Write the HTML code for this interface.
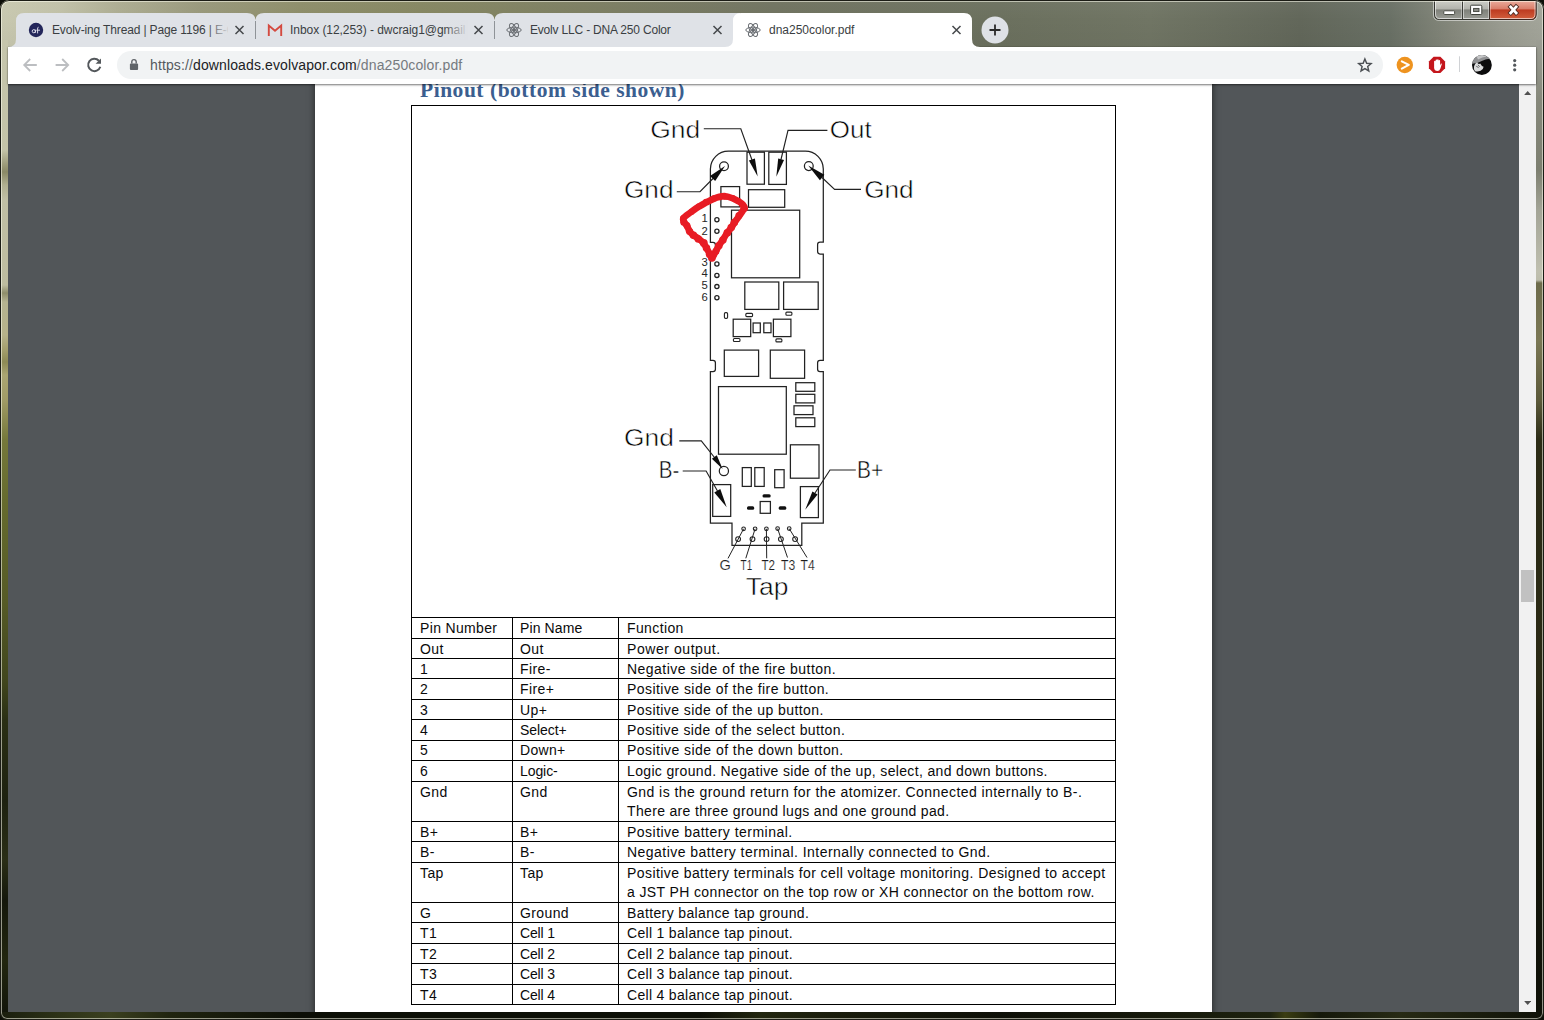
<!DOCTYPE html>
<html lang="en">
<head>
<meta charset="utf-8">
<title>dna250color.pdf</title>
<style>
*{box-sizing:border-box;margin:0;padding:0}
html,body{width:1544px;height:1020px;overflow:hidden;background:#0c0e08}
body{position:relative;font-family:"Liberation Sans",sans-serif;color:#000}
.abs{position:absolute}
/* ---------- window frame (aero glass) ---------- */
#frame{position:absolute;left:0;top:0;width:1544px;height:1020px;border-radius:9px 9px 7px 7px;overflow:hidden;
 background:#14180c}
#glassTop{position:absolute;left:0;top:0;width:1544px;height:90px;
 background:linear-gradient(180deg,rgba(255,255,255,.04) 0px,rgba(255,255,255,0) 20px,rgba(0,0,0,.03) 47px),linear-gradient(90deg,#c8c8b0 0px,#c0c0a7 60px,#abab90 120px,#97977a 200px,#8c8c68 300px,#848560 420px,#7a7c60 600px,#6f725f 772px,#6b705e 1000px,#707564 1150px,#62675a 1300px,#697065 1390px,#84877b 1450px,#999b90 1500px,#a3a59a 1544px)}
#glassLeft{position:absolute;left:0;top:40px;width:8px;height:980px;
 background:linear-gradient(180deg,#c6c6ac 0px,#c3c3a8 110px,#9b9a79 125px,#8a8966 132px,#b0af90 145px,#c0bfa5 160px,#bdbc9f 245px,#8e8d6a 253px,#b5b391 262px,#b6b28a 295px,#a39e6c 310px,#8d8a55 322px,#aaa572 335px,#a09b66 360px,#75783a 400px,#666b2e 460px,#565b26 560px,#41461d 640px,#2a2f14 680px,#1d2110 760px,#2a2e16 820px,#14170b 860px,#22260f 920px,#12150a 972px)}
#glassRight{position:absolute;left:1536px;top:40px;width:8px;height:980px;
 background:linear-gradient(180deg,#9c9e94 0px,#86887b 60px,#7d7f70 130px,#a3a496 170px,#c0c0b0 232px,#bdbdac 240px,#6d6b4b 243px,#7b7855 300px,#5c5a3a 360px,#2c2c16 400px,#2a2914 640px,#17190b 720px,#0f1108 972px)}
#glassBottom{position:absolute;left:0;top:1012px;width:1544px;height:8px;
 background:linear-gradient(90deg,#1a1e0e 0px,#2d3217 60px,#3b401f 110px,#20240f 170px,#0c0e06 300px,#0c0e06 700px,#22260f 760px,#1a1d0c 830px,#0d0f07 1000px,#1d210e 1270px,#3b3d12 1285px,#15180a 1320px,#272a14 1400px,#0f1108 1544px)}
#edge{position:absolute;left:0;top:0;width:1544px;height:1020px;border-radius:9px 9px 7px 7px;border:1px solid #1b1c15;box-shadow:inset 0 0 0 1px rgba(255,255,240,.55);pointer-events:none}
/* ---------- tabs ---------- */
.ttl{position:absolute;top:22px;height:16px;line-height:16px;font-size:12px;color:#3a3e42;white-space:nowrap;overflow:hidden}
.fade{position:absolute;top:20px;width:24px;height:20px;background:linear-gradient(90deg,rgba(222,225,230,0),#dee1e6)}
#toolbar{position:absolute;left:8px;top:47px;width:1528px;height:37px;background:#fff;box-shadow:0 1px 2px rgba(0,0,0,.5),0 0 1px rgba(0,0,0,.4)}
#omni{position:absolute;left:109px;top:4px;width:1266px;height:28px;border-radius:14px;background:#f1f3f4}
#url{position:absolute;left:150px;top:57px;font-size:14px;line-height:16px;color:#202124;white-space:nowrap;letter-spacing:0.12px}
#url span{color:#767a7f}
#url i{font-style:normal;color:#55595e}
/* ---------- content ---------- */
#content{position:absolute;left:8px;top:84px;width:1528px;height:928px;background:#525659;overflow:hidden}
#page{position:absolute;left:307px;top:-20px;width:897px;height:960px;background:#fff;box-shadow:0 0 7px rgba(0,0,0,.6)}
#scroll{position:absolute;left:1511px;top:0;width:17px;height:928px;background:#f1f1f1}
#thumb{position:absolute;left:2px;top:486px;width:13px;height:32px;background:#c1c1c1}
/* ---------- pdf ---------- */
#h1{position:absolute;left:420px;top:77.2px;font-family:"Liberation Serif",serif;font-weight:bold;font-size:21.5px;letter-spacing:0.52px;line-height:26px;color:#3b5e8f;white-space:nowrap}
.hl{position:absolute;left:411px;width:705px;height:1px;background:#000}
.vl{position:absolute;width:1px;background:#000}
.t{position:absolute;font-size:14px;letter-spacing:0.39px;line-height:16px;white-space:nowrap;color:#0a0a0a}
</style>
</head>
<body>
<div id="frame">
 <div id="glassTop"></div>
 <div id="glassLeft"></div>
 <div id="glassRight"></div>
 <div id="glassBottom"></div>

 <!-- CONTENT -->
 <div id="content">
  <div id="page"></div>
  <div id="scroll">
   <svg class="abs" style="left:5px;top:7.3px" width="7.4" height="4" viewBox="0 0 9 5"><path d="M0 5 L4.5 0 L9 5Z" fill="#505050"/></svg>
   <div id="thumb"></div>
   <svg class="abs" style="left:5px;top:916.6px" width="7.4" height="4" viewBox="0 0 9 5"><path d="M0 0 L4.5 5 L9 0Z" fill="#505050"/></svg>
  </div>
 </div>

 <!-- PDF text / table (absolute in window coords) -->
 <div id="pdf">
  <div id="h1">Pinout (bottom side shown)</div>
  <div class="hl" style="top:105px"></div>
  <div class="hl" style="top:617.0px"></div>
  <div class="hl" style="top:638.0px"></div>
  <div class="hl" style="top:658.0px"></div>
  <div class="hl" style="top:678.0px"></div>
  <div class="hl" style="top:699.0px"></div>
  <div class="hl" style="top:719.0px"></div>
  <div class="hl" style="top:740.0px"></div>
  <div class="hl" style="top:760.0px"></div>
  <div class="hl" style="top:781.0px"></div>
  <div class="hl" style="top:821.0px"></div>
  <div class="hl" style="top:841.0px"></div>
  <div class="hl" style="top:862.0px"></div>
  <div class="hl" style="top:902.0px"></div>
  <div class="hl" style="top:922.0px"></div>
  <div class="hl" style="top:943.0px"></div>
  <div class="hl" style="top:963.0px"></div>
  <div class="hl" style="top:984.0px"></div>
  <div class="hl" style="top:1004.0px"></div>
  <div class="vl" style="left:411px;top:105px;height:900px"></div>
  <div class="vl" style="left:1115px;top:105px;height:900px"></div>
  <div class="vl" style="left:512px;top:617px;height:388px"></div>
  <div class="vl" style="left:618px;top:617px;height:388px"></div>
  <div class="t" style="left:420px;top:620.15px;letter-spacing:0.345px">Pin Number</div>
  <div class="t" style="left:520px;top:620.15px;letter-spacing:0.124px">Pin Name</div>
  <div class="t" style="left:627px;top:620.15px;letter-spacing:0.386px">Function</div>
  <div class="t" style="left:420px;top:641.15px">Out</div>
  <div class="t" style="left:520px;top:641.15px">Out</div>
  <div class="t" style="left:627px;top:641.15px;letter-spacing:0.561px">Power output.</div>
  <div class="t" style="left:420px;top:661.15px">1</div>
  <div class="t" style="left:520px;top:661.15px">Fire-</div>
  <div class="t" style="left:627px;top:661.15px;letter-spacing:0.465px">Negative side of the fire button.</div>
  <div class="t" style="left:420px;top:681.15px">2</div>
  <div class="t" style="left:520px;top:681.15px">Fire+</div>
  <div class="t" style="left:627px;top:681.15px;letter-spacing:0.444px">Positive side of the fire button.</div>
  <div class="t" style="left:420px;top:702.15px">3</div>
  <div class="t" style="left:520px;top:702.15px">Up+</div>
  <div class="t" style="left:627px;top:702.15px;letter-spacing:0.423px">Positive side of the up button.</div>
  <div class="t" style="left:420px;top:722.15px">4</div>
  <div class="t" style="left:520px;top:722.15px;letter-spacing:-0.061px">Select+</div>
  <div class="t" style="left:627px;top:722.15px;letter-spacing:0.386px">Positive side of the select button.</div>
  <div class="t" style="left:420px;top:742.15px">5</div>
  <div class="t" style="left:520px;top:742.15px;letter-spacing:0.296px">Down+</div>
  <div class="t" style="left:627px;top:742.15px;letter-spacing:0.459px">Positive side of the down button.</div>
  <div class="t" style="left:420px;top:763.15px">6</div>
  <div class="t" style="left:520px;top:763.15px;letter-spacing:-0.080px">Logic-</div>
  <div class="t" style="left:627px;top:763.15px;letter-spacing:0.348px">Logic ground. Negative side of the up, select, and down buttons.</div>
  <div class="t" style="left:420px;top:784.15px">Gnd</div>
  <div class="t" style="left:520px;top:784.15px">Gnd</div>
  <div class="t" style="left:627px;top:784.15px;letter-spacing:0.434px">Gnd is the ground return for the atomizer. Connected internally to B-.</div>
  <div class="t" style="left:627px;top:803.15px;letter-spacing:0.336px">There are three ground lugs and one ground pad.</div>
  <div class="t" style="left:420px;top:824.15px">B+</div>
  <div class="t" style="left:520px;top:824.15px">B+</div>
  <div class="t" style="left:627px;top:824.15px;letter-spacing:0.475px">Positive battery terminal.</div>
  <div class="t" style="left:420px;top:844.15px">B-</div>
  <div class="t" style="left:520px;top:844.15px">B-</div>
  <div class="t" style="left:627px;top:844.15px;letter-spacing:0.458px">Negative battery terminal. Internally connected to Gnd.</div>
  <div class="t" style="left:420px;top:865.15px">Tap</div>
  <div class="t" style="left:520px;top:865.15px">Tap</div>
  <div class="t" style="left:627px;top:865.15px;letter-spacing:0.421px">Positive battery terminals for cell voltage monitoring. Designed to accept</div>
  <div class="t" style="left:627px;top:884.15px;letter-spacing:0.381px">a JST PH connector on the top row or XH connector on the bottom row.</div>
  <div class="t" style="left:420px;top:905.15px">G</div>
  <div class="t" style="left:520px;top:905.15px;letter-spacing:0.381px">Ground</div>
  <div class="t" style="left:627px;top:905.15px;letter-spacing:0.381px">Battery balance tap ground.</div>
  <div class="t" style="left:420px;top:925.15px">T1</div>
  <div class="t" style="left:520px;top:925.15px;letter-spacing:-0.145px">Cell 1</div>
  <div class="t" style="left:627px;top:925.15px;letter-spacing:0.306px">Cell 1 balance tap pinout.</div>
  <div class="t" style="left:420px;top:946.15px">T2</div>
  <div class="t" style="left:520px;top:946.15px;letter-spacing:-0.145px">Cell 2</div>
  <div class="t" style="left:627px;top:946.15px;letter-spacing:0.306px">Cell 2 balance tap pinout.</div>
  <div class="t" style="left:420px;top:966.15px">T3</div>
  <div class="t" style="left:520px;top:966.15px;letter-spacing:-0.145px">Cell 3</div>
  <div class="t" style="left:627px;top:966.15px;letter-spacing:0.306px">Cell 3 balance tap pinout.</div>
  <div class="t" style="left:420px;top:987.15px">T4</div>
  <div class="t" style="left:520px;top:987.15px;letter-spacing:-0.145px">Cell 4</div>
  <div class="t" style="left:627px;top:987.15px;letter-spacing:0.306px">Cell 4 balance tap pinout.</div>
  <svg class="abs" style="left:0;top:0" width="1544" height="1020" viewBox="0 0 1544 1020" font-family="'Liberation Sans',sans-serif" fill="none" stroke="#222" stroke-width="1.25">
   <!-- board outline -->
   <path d="M710.4 242.3 V169 A18 18 0 0 1 728.4 151.2 H805.3 A18 18 0 0 1 823.3 169 V242 H820 Q817.6 242 817.6 244.4 V251.6 Q817.6 254 820 254 H823.3 V360.4 H820 Q817.6 360.4 817.6 362.8 V369.2 Q817.6 371.6 820 371.6 H823.3 V523.2 H801.8 V545.4 H732 V523.2 H710.4 V371.6 H713 Q715.4 371.6 715.4 369.2 V362.8 Q715.4 360.4 713 360.4 H710.4 V254 H713 Q715.4 254 715.4 251.6 V244.7 Q715.4 242.3 713 242.3 Z"/>
   <!-- top pads -->
   <rect x="747" y="152.2" width="17.4" height="32"/>
   <rect x="768.8" y="152.2" width="17.6" height="32.2"/>
   <circle cx="724" cy="166.3" r="4.4"/>
   <circle cx="808.8" cy="166.1" r="4.4"/>
   <rect x="720.9" y="186.6" width="18.7" height="20.3"/>
   <rect x="748.5" y="189.7" width="36.2" height="17.6"/>
   <rect x="731.5" y="210.2" width="68.2" height="67.6"/>
   <rect x="744.8" y="282" width="34" height="27.4"/>
   <rect x="783.6" y="282" width="34.6" height="27.4"/>
   <g stroke-width="1.1">
   <rect x="745.8" y="313.4" width="6.8" height="3.2" rx="1"/>
   <rect x="785.9" y="312.1" width="6" height="3.2" rx="1"/>
   <rect x="724.4" y="312.6" width="3.2" height="5.8" rx="1.2"/>
   <rect x="733.4" y="338.5" width="6.6" height="3" rx="1"/>
   <rect x="775.9" y="338.9" width="6" height="3" rx="1"/>
   </g>
   <rect x="733.2" y="319.2" width="17.5" height="17.4"/>
   <rect x="773.4" y="319.2" width="17.5" height="17.4"/>
   <rect x="753.1" y="323" width="7.2" height="9.7"/>
   <rect x="763.8" y="323" width="7.2" height="9.7"/>
   <rect x="724.3" y="350.1" width="34.3" height="26.3"/>
   <rect x="770.3" y="350.1" width="34.3" height="28.2"/>
   <rect x="718.5" y="386.6" width="67.8" height="67.6"/>
   <rect x="795.8" y="382.7" width="19" height="8.6"/>
   <rect x="795.8" y="394.3" width="19" height="8.6"/>
   <rect x="794" y="405.8" width="19" height="8.8"/>
   <rect x="795.8" y="417.8" width="19" height="8.8"/>
   <rect x="790.4" y="444.8" width="28.6" height="33.4"/>
   <circle cx="723.9" cy="471" r="4.6"/>
   <rect x="742.3" y="467.6" width="9" height="18.8"/>
   <rect x="754.8" y="467.6" width="9.4" height="18.8"/>
   <rect x="774.7" y="469.7" width="9.4" height="18"/>
   <rect x="712.7" y="484.6" width="18" height="31.8"/>
   <rect x="800.4" y="486.6" width="18" height="31"/>
   <rect x="760.2" y="501.5" width="10.2" height="11.8"/>
   <g fill="#111" stroke="none">
    <rect x="762.5" y="494.2" width="8.2" height="3.3" rx="1.5"/>
    <rect x="747" y="506.3" width="7.2" height="3.4" rx="1.5"/>
    <rect x="778.7" y="506.3" width="7.6" height="3.4" rx="1.5"/>
   </g>
   <!-- pin holes 1..6 -->
   <g stroke-width="1.3">
    <circle cx="716.9" cy="219.8" r="2.1"/><circle cx="716.9" cy="231.2" r="2.1"/>
    <circle cx="716.9" cy="264" r="2.1"/><circle cx="716.9" cy="275.4" r="2.1"/>
    <circle cx="716.9" cy="286.6" r="2.1"/><circle cx="716.9" cy="297.7" r="2.1"/>
   </g>
   <!-- tap pins -->
   <g stroke-width="1.1">
    <circle cx="743.6" cy="528.8" r="1.8"/><circle cx="755.1" cy="528.8" r="1.8"/><circle cx="766.4" cy="528.8" r="1.8"/><circle cx="777.6" cy="528.6" r="1.8"/><circle cx="789.2" cy="528.6" r="1.8"/>
    <circle cx="738.1" cy="539.1" r="2.4"/><circle cx="752.5" cy="539.1" r="2.4"/><circle cx="766.6" cy="539.1" r="2.4"/><circle cx="780.9" cy="539.1" r="2.4"/><circle cx="795.1" cy="539.1" r="2.4"/>
    <path d="M743.6 528.8 L728 558.4 M755.1 528.8 L745.8 558.3 M766.4 528.8 L766.7 558.3 M777.6 528.6 L787.5 557.5 M789.2 528.6 L807 557.5" stroke-width="1"/>
   </g>
   <!-- leaders -->
   <g stroke-width="1.15">
    <path d="M703.8 128.7 H740.8 L752 160"/>
    <path d="M827.4 130.3 H788 L781 159.5"/>
    <path d="M676.8 191.7 H700 L713 178.5"/>
    <path d="M861 189.3 H834.6 L822 177.5"/>
    <path d="M679.3 440.9 H701.3 L714.5 457.5"/>
    <path d="M682.7 471 H706.1 L717.5 491"/>
    <path d="M855.8 470 H830 L815 493"/>
   </g>
   <g fill="#0d0d0d" stroke="none">
    <path d="M757.7 176.6 L748.9 160.6 L754.9 158.5 Z"/>
    <path d="M776.3 176.8 L778.2 158.4 L784 160 Z"/>
    <path d="M725 166 L715.2 181.1 L710 175.9 Z"/>
    <path d="M808.2 165.6 L824.4 174.7 L819.9 180.2 Z"/>
    <path d="M722.6 469 L711.9 458.7 L716.8 455.3 Z"/>
    <path d="M726.7 507.3 L714.3 492.5 L720.3 489 Z"/>
    <path d="M805.2 509.8 L812.4 491.4 L817.6 494.6 Z"/>
   </g>
   <!-- labels -->
   <g fill="#000" stroke="#fff" stroke-width=".5">
    <text x="650.2" y="137.5" font-size="23.5" textLength="50" lengthAdjust="spacingAndGlyphs">Gnd</text>
    <text x="829.8" y="137.5" font-size="23.5" textLength="41.8" lengthAdjust="spacingAndGlyphs">Out</text>
    <text x="624" y="197.7" font-size="23.5" textLength="49.5" lengthAdjust="spacingAndGlyphs">Gnd</text>
    <text x="864.2" y="197.7" font-size="23.5" textLength="49.5" lengthAdjust="spacingAndGlyphs">Gnd</text>
    <text x="624" y="446.4" font-size="23.5" textLength="49.8" lengthAdjust="spacingAndGlyphs">Gnd</text>
    <text x="658.8" y="478.2" font-size="23.5" textLength="20.6" lengthAdjust="spacingAndGlyphs">B-</text>
    <text x="857" y="478.2" font-size="23.5" textLength="26.2" lengthAdjust="spacingAndGlyphs">B+</text>
    <text x="745.8" y="594.8" font-size="23.8" textLength="42.6" lengthAdjust="spacingAndGlyphs">Tap</text>
    <g font-size="14.6" fill="#1c1c1c" stroke-width=".15">
     <text x="719.4" y="570.4">G</text>
     <text x="740.6" y="570.4" textLength="11.6" lengthAdjust="spacingAndGlyphs">T1</text>
     <text x="761.5" y="570.4" textLength="13.6" lengthAdjust="spacingAndGlyphs">T2</text>
     <text x="781.1" y="570.4" textLength="14.2" lengthAdjust="spacingAndGlyphs">T3</text>
     <text x="800.6" y="570.4" textLength="14.2" lengthAdjust="spacingAndGlyphs">T4</text>
    </g>
    <g font-size="11.3" fill="#262626" stroke="none" text-anchor="middle">
     <text x="704.6" y="222">1</text><text x="704.6" y="235">2</text><text x="704.6" y="265.9">3</text>
     <text x="704.6" y="277.3">4</text><text x="704.6" y="288.8">5</text><text x="704.6" y="301.4">6</text>
    </g>
   </g>
   <!-- red scribble -->
   <path d="M683.5 218.1 C684.6 216.5 688.7 213.9 691.1 212.0 C693.6 210.2 696.3 208.2 698.8 206.7 C701.2 205.1 704.0 203.7 706.4 202.4 C708.9 201.2 712.0 199.5 714.1 198.6 C716.2 197.7 717.6 197.1 719.4 196.7 C721.3 196.3 723.5 195.9 725.6 196.2 C727.6 196.4 730.4 197.4 732.4 198.2 C734.5 199.1 736.9 200.3 738.6 201.3 C740.2 202.3 741.9 203.6 742.8 204.7 C743.7 205.8 744.9 206.4 744.3 208.2 C743.8 210.0 740.9 213.5 739.3 215.8 C737.7 218.2 735.6 220.8 734.4 222.7 C733.1 224.6 732.5 226.0 731.3 227.7 C730.1 229.4 728.4 231.2 727.1 233.1 C725.7 235.0 724.2 237.6 722.9 239.6 C721.6 241.5 720.2 243.5 719.1 245.3 C718.0 247.1 716.9 249.4 716.0 251.0 C715.1 252.7 714.0 254.5 713.3 255.6 C712.6 256.7 712.2 258.2 711.6 257.9 C711.1 257.7 710.7 255.7 709.9 254.1 C709.0 252.5 707.5 249.7 706.4 248.0 C705.4 246.2 704.6 244.5 703.4 243.0 C702.1 241.5 700.4 240.1 698.8 238.8 C697.1 237.5 694.5 236.2 693.0 235.0 C691.6 233.7 690.6 232.6 689.6 231.1 C688.6 229.7 687.8 227.3 686.9 225.8 C686.1 224.3 684.8 223.2 684.2 222.0 C683.7 220.7 682.4 219.7 683.5 218.1 Z" stroke="#e81c24" stroke-width="6.6" stroke-linejoin="round" stroke-linecap="round"/>
   <g fill="#e81c24" stroke="none"><circle cx="683.1" cy="218.3" r="3.10"/><circle cx="691.2" cy="211.9" r="3.02"/><circle cx="698.8" cy="206.2" r="3.02"/><circle cx="706.0" cy="202.0" r="3.13"/><circle cx="714.4" cy="198.2" r="3.13"/><circle cx="719.6" cy="197.2" r="3.07"/><circle cx="725.5" cy="196.7" r="3.17"/><circle cx="732.8" cy="198.0" r="3.01"/><circle cx="738.2" cy="201.1" r="3.04"/><circle cx="742.5" cy="204.8" r="3.24"/><circle cx="744.2" cy="208.2" r="3.79"/><circle cx="738.9" cy="215.5" r="3.53"/><circle cx="734.3" cy="222.5" r="3.81"/><circle cx="731.2" cy="227.5" r="3.76"/><circle cx="727.3" cy="232.8" r="3.86"/><circle cx="722.9" cy="239.9" r="3.76"/><circle cx="718.8" cy="245.8" r="3.83"/><circle cx="715.9" cy="251.3" r="3.55"/><circle cx="713.3" cy="255.2" r="3.57"/><circle cx="711.9" cy="258.0" r="3.80"/><circle cx="709.7" cy="254.3" r="3.89"/><circle cx="706.5" cy="247.9" r="3.77"/><circle cx="703.8" cy="243.0" r="3.88"/><circle cx="698.3" cy="239.0" r="3.80"/><circle cx="693.5" cy="235.3" r="3.79"/><circle cx="689.5" cy="231.3" r="3.63"/><circle cx="686.9" cy="225.5" r="3.51"/><circle cx="683.8" cy="222.2" r="3.55"/></g>
  </svg>

 </div>

 <!-- TOOLBAR -->
 <div id="toolbar"><div id="omni"></div></div>
 <div id="url"><i>https://</i>downloads.evolvapor.com<span>/dna250color.pdf</span></div>
 <!-- tab strip -->
 <svg class="abs" style="left:0;top:0" width="1544" height="48" viewBox="0 0 1544 48">
  <!-- inactive block -->
  <path d="M8 47 Q16 47 16 39 V21 Q16 13 24 13 H247 Q255 13 255.5 20 Q256 13 264 13 H486 Q494 13 494.5 20 Q495 13 503 13 H740 V47 Z" fill="#dfe2e7"/>
  <!-- active tab -->
  <path d="M725 47 Q733 47 733 39 V21 Q733 13 741 13 H964 Q972 13 972 21 V39 Q972 47 980 47 Z" fill="#ffffff"/>
  <rect x="255" y="21" width="1" height="18" fill="#8f9398"/>
  <rect x="494" y="21" width="1" height="18" fill="#8f9398"/>
  <!-- new tab button -->
  <circle cx="995" cy="30" r="13.5" fill="#dee1e6"/>
  <path d="M989.5 30 H1000.5 M995 24.5 V35.5" stroke="#2b2b2b" stroke-width="1.8"/>
  <!-- favicon 1 -->
  <circle cx="36" cy="30" r="7.2" fill="#23265a"/>
  <path d="M32.2 31.2 a1.6 1.6 0 1 0 3.2 0 a1.6 1.6 0 1 0 -3.2 0 M35.4 29.6 V32.8 M36.4 30.2 H40 M38.6 27.2 Q37.4 27.2 37.6 29 V33.4" fill="none" stroke="#e8e8f4" stroke-width=".9"/>
  <!-- favicon 2 gmail M -->
  <path d="M268.8 36 V25.6 L275 30.8 L281.2 25.6 V36" fill="none" stroke="#d44a40" stroke-width="1.9" stroke-linejoin="miter"/>
  <!-- favicon 3,4 atom -->
  <g fill="none" stroke="#6a6e73" stroke-width="1">
   <g transform="translate(514 30)"><ellipse rx="7.2" ry="2.8"/><ellipse rx="7.2" ry="2.8" transform="rotate(60)"/><ellipse rx="7.2" ry="2.8" transform="rotate(120)"/><circle r="1.5" fill="#6a6e73"/></g>
   <g transform="translate(753 30)"><ellipse rx="7.2" ry="2.8"/><ellipse rx="7.2" ry="2.8" transform="rotate(60)"/><ellipse rx="7.2" ry="2.8" transform="rotate(120)"/><circle r="1.5" fill="#6a6e73"/></g>
  </g>
  <!-- close X -->
  <g stroke="#44474a" stroke-width="1.5">
   <path d="M235.5 26 L243.5 34 M243.5 26 L235.5 34"/>
   <path d="M474.5 26 L482.5 34 M482.5 26 L474.5 34"/>
   <path d="M713.5 26 L721.5 34 M721.5 26 L713.5 34"/>
   <path d="M952.5 26 L960.5 34 M960.5 26 L952.5 34"/>
  </g>
 </svg>
 <div class="ttl" style="left:52px;width:176px;letter-spacing:-0.14px">Evolv-ing Thread | Page 1196 | E-Cigarette Forum</div>
 <div class="ttl" style="left:290px;width:176px;letter-spacing:-0.05px">Inbox (12,253) - dwcraig1@gmail.com - Gmail</div>
 <div class="ttl" style="left:530px;width:176px;letter-spacing:-0.19px">Evolv LLC - DNA 250 Color</div>
 <div class="ttl" style="left:769px;width:176px">dna250color.pdf</div>
 <div class="fade" style="left:206px"></div>
 <div class="fade" style="left:444px"></div>

 <!-- window buttons -->
 <svg class="abs" style="left:1430px;top:0" width="110" height="24" viewBox="0 0 110 24">
  <defs>
   <linearGradient id="gb" x1="0" y1="0" x2="0" y2="1"><stop offset="0" stop-color="#cfd0ca"/><stop offset=".47" stop-color="#b1b2ab"/><stop offset=".5" stop-color="#7e8079"/><stop offset="1" stop-color="#9b9d96"/></linearGradient>
   <linearGradient id="gr" x1="0" y1="0" x2="0" y2="1"><stop offset="0" stop-color="#ecb0a1"/><stop offset=".47" stop-color="#d97c68"/><stop offset=".5" stop-color="#bd3a20"/><stop offset="1" stop-color="#d3603e"/></linearGradient>
  </defs>
  <path d="M3.5 0 V15 Q3.5 20.5 9.5 20.5 H101 Q107 20.5 107 15 V0" fill="none" stroke="rgba(255,255,255,.5)" stroke-width="1"/>
  <path d="M4.5 0 V14 Q4.5 19.5 9.5 19.5 H101 Q106 19.5 106 14 V0 Z" fill="url(#gb)" stroke="#34352f" stroke-width="1"/>
  <path d="M59.5 0 H106 V14 Q106 19.5 101 19.5 H59.5 Z" fill="url(#gr)" stroke="#3f2620" stroke-width="1"/>
  <path d="M5.5 0 V14 Q5.5 18.5 9.5 18.5 H101 Q105 18.5 105 14 V0" fill="none" stroke="rgba(255,255,255,.6)" stroke-width="1"/>
  <rect x="32" y="0" width="1" height="19" fill="#3d3e38"/><rect x="33" y="0" width="1" height="18" fill="rgba(255,255,255,.5)"/><rect x="31" y="0" width="1" height="18" fill="rgba(255,255,255,.35)"/>
  <rect x="59" y="0" width="1" height="19" fill="#40322c"/><rect x="58" y="0" width="1" height="18" fill="rgba(255,255,255,.4)"/><rect x="60" y="0" width="1" height="18" fill="rgba(255,255,255,.35)"/>
  <!-- min -->
  <rect x="13.8" y="10.8" width="10.8" height="3.7" rx=".8" fill="#fff" stroke="#4a4c45" stroke-width="1"/>
  <!-- max -->
  <rect x="40.6" y="5.2" width="11.2" height="9.3" rx="1" fill="#fff" stroke="#3e403a" stroke-width="1"/>
  <rect x="43.6" y="8.4" width="5.4" height="3.2" fill="#8a8c85" stroke="#3e403a" stroke-width=".9"/>
  <!-- close X -->
  <path d="M80.7 6.9 L86.1 12.9 M86.1 6.9 L80.7 12.9" stroke="#4c2a22" stroke-width="4.5" stroke-linecap="square"/>
  <path d="M80.7 6.9 L86.1 12.9 M86.1 6.9 L80.7 12.9" stroke="#fff" stroke-width="2.8" stroke-linecap="square"/>
 </svg>

 <!-- toolbar icons -->
 <svg class="abs" style="left:8px;top:47px" width="1528" height="37" viewBox="8 47 1528 37">
  <g fill="none" stroke="#bcbec1" stroke-width="1.8">
   <path d="M36.8 65 H24.6 M30.2 59 L24.2 65 L30.2 71"/>
   <path d="M55.6 65 H67.8 M62.2 59 L68.2 65 L62.2 71"/>
  </g>
  <!-- reload -->
  <path d="M98.9 60.7 A6.2 6.2 0 1 0 100.3 66.8" fill="none" stroke="#53575b" stroke-width="2"/>
  <path d="M101 58.4 V63.8 H95.6 Z" fill="#53575b"/>
  <!-- lock -->
  <rect x="129.9" y="63.4" width="8.2" height="6.6" rx="1" fill="#5f6368"/>
  <path d="M131.8 63.6 V61.8 a2.2 2.2 0 0 1 4.4 0 V63.6" fill="none" stroke="#5f6368" stroke-width="1.4"/>
  <!-- star -->
  <path d="M1364.9 59 L1366.65 63.2 L1371.1 63.55 L1367.7 66.5 L1368.75 70.9 L1364.9 68.55 L1361.05 70.9 L1362.1 66.5 L1358.7 63.55 L1363.15 63.2 Z" fill="none" stroke="#4c5054" stroke-width="1.45" stroke-linejoin="miter"/>
  <!-- orange ext -->
  <circle cx="1404.8" cy="65" r="8.2" fill="#ee931f"/>
  <path d="M1401.8 61.4 L1408.8 64.9 L1401.8 68.6" fill="none" stroke="#fff" stroke-width="2.1" stroke-linejoin="round" stroke-linecap="round"/>
  <!-- red octagon ext -->
  <path d="M1433.6 56.7 H1440.4 L1445.1 61.4 V68.2 L1440.4 72.9 H1433.6 L1428.9 68.2 V61.4 Z" fill="#c4161c"/>
  <path d="M1434.1 66.2 V61.6 a.75 .75 0 0 1 1.5 0 V60.2 a.75 .75 0 0 1 1.5 0 V59.9 a.75 .75 0 0 1 1.5 0 V60.7 a.75 .75 0 0 1 1.5 0 V65.5 L1441 63.6 Q1441.9 63.2 1441.8 64.2 L1440.4 68.4 Q1439.6 71 1437.4 71 Q1434.4 71 1434.1 68 Z" fill="#fff"/>
  <rect x="1459" y="56.3" width="1" height="15.7" fill="#d0d2d5"/>
  <!-- avatar -->
  <clipPath id="avc"><circle cx="1481.9" cy="65" r="9.9"/></clipPath>
  <g clip-path="url(#avc)">
   <rect x="1470" y="53" width="24" height="24" fill="#0b0b0c"/>
   <path d="M1470 53 H1494 V60.5 Q1488 57.5 1483 60.5 Q1478 63.5 1470 64 Z" fill="#8f9092"/>
   <path d="M1476 55 Q1481 53.5 1487 56.5 Q1482 57 1478 59.5 Z" fill="#c4c5c6"/>
   <path d="M1474 66.5 Q1475 62.8 1477.2 62.4 Q1478.6 64.6 1480.2 63.6 Q1481.6 66.4 1483.6 66.8 Q1483.4 69.8 1480.6 70.8 Q1477.2 72.2 1475 71.2 Q1473.4 69.2 1474 66.5 Z" fill="#d9dadb"/>
   <path d="M1476.2 66.2 L1478.6 67.6 M1478 64.8 L1479.6 66.8" stroke="#4a4b4d" stroke-width=".8"/>
  </g>
  <!-- menu dots -->
  <circle cx="1514.7" cy="60.6" r="1.6" fill="#53575b"/><circle cx="1514.7" cy="65.2" r="1.6" fill="#53575b"/><circle cx="1514.7" cy="69.8" r="1.6" fill="#53575b"/>
 </svg>

 <div id="edge"></div>
</div>
</body>
</html>
